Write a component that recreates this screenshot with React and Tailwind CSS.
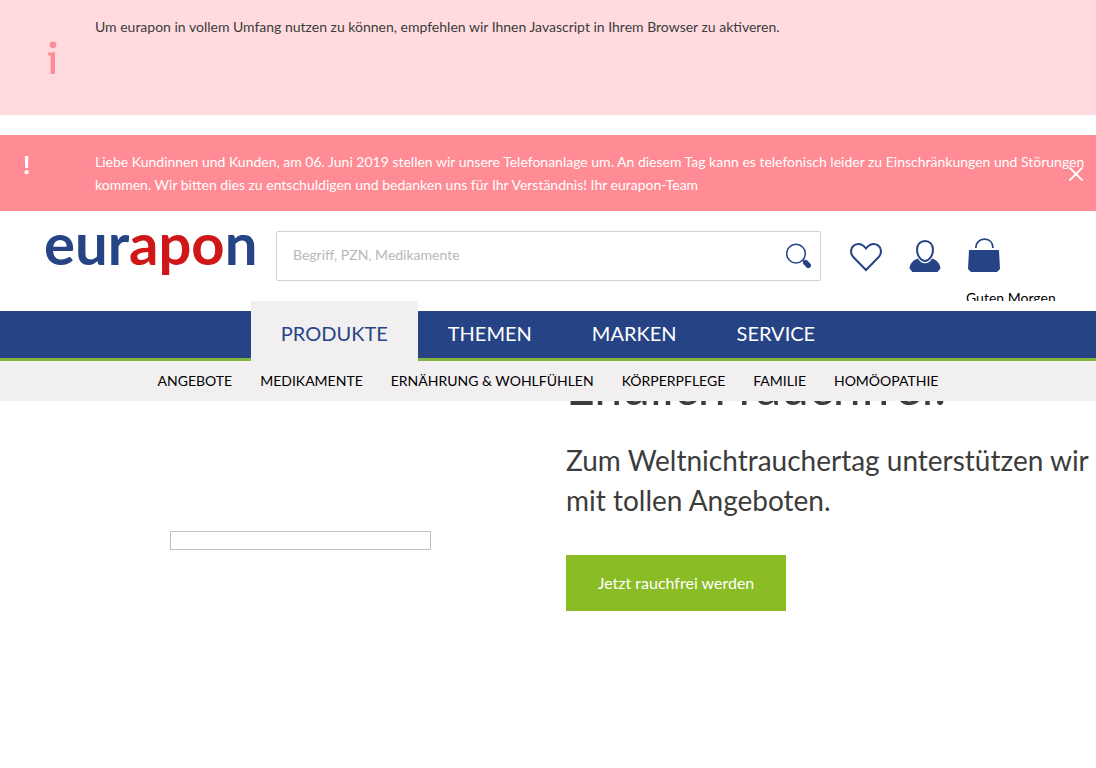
import React, { useState } from 'react';

const mainNav = ['PRODUKTE', 'THEMEN', 'MARKEN', 'SERVICE'];

const subNav = [
  'ANGEBOTE',
  'MEDIKAMENTE',
  'ERNÄHRUNG & WOHLFÜHLEN',
  'KÖRPERPFLEGE',
  'FAMILIE',
  'HOMÖOPATHIE'
];

const InfoIcon = () => (
  <svg width="10" height="34" viewBox="0 0 10 34" fill="#ff8c94" aria-hidden="true">
    <circle cx="5" cy="3.8" r="3.4" />
    <path d="M0.2 11.5Q4 11.5 7 11V33H2.6V14.6H0.2Z" />
  </svg>
);

const AlertIcon = () => (
  <svg width="6" height="20" viewBox="0 0 6 20" fill="#fff" aria-hidden="true">
    <path d="M0.8 1H4.4L3.9 13H1.3Z" />
    <circle cx="2.6" cy="17.2" r="2.1" />
  </svg>
);

const SearchIcon = () => (
  <svg width="26" height="26" viewBox="0 0 26 26" fill="none" stroke="#264485" aria-hidden="true">
    <circle cx="10" cy="10.6" r="9.3" strokeWidth="1.5" />
    <path d="M16.5 17L18.5 19" strokeWidth="1.5" />
    <path d="M19.7 19.7L22.3 22.3" strokeWidth="5.4" strokeLinecap="round" />
  </svg>
);

const HeartIcon = () => (
  <svg width="32" height="34" viewBox="0 0 32 34" fill="none" stroke="#264485" strokeWidth="2" aria-hidden="true">
    <path d="M16 32L3.5 19.300C-0.200 15 0.500 9.800 4 7.400C8 4.800 13 6 16 10.500C19 6 24 4.800 28 7.400C31.500 9.800 32.200 15 28.500 19.300Z" />
  </svg>
);

const UserIcon = () => (
  <svg width="32" height="34" viewBox="0 0 32 34" aria-hidden="true">
    <path d="M9 20.5C10.5 23.5 13 25.3 16 25.3C19 25.3 21.5 23.5 23 20.5C28 22 31 25.5 31.5 30.5L28.5 34H3.5L0.5 30.5C1 25.5 4 22 9 20.5Z" fill="#264485" />
    <path d="M16 3C20.8 3 24 6.500 24 11.500C24 17 20.500 23 16 23C11.500 23 8 17 8 11.500C8 6.500 11.200 3 16 3Z" fill="#fff" stroke="#264485" strokeWidth="2" />
  </svg>
);

const BagIcon = () => (
  <svg width="32" height="34" viewBox="0 0 32 34" aria-hidden="true">
    <path d="M1 12H31L32 31L29 34H3L0 31Z" fill="#264485" />
    <path d="M7.8 10C7.8 4.500 11.500 1.200 16.500 1.200C21.500 1.200 25 4.500 25 10" fill="none" stroke="#264485" strokeWidth="1.800" />
  </svg>
);

const App = () => {
  const [query, setQuery] = useState('');
  const [active, setActive] = useState('PRODUKTE');
  const [showNotice, setShowNotice] = useState(true);

  return (
    <div className="min-h-screen overflow-x-hidden bg-white font-['Lato',sans-serif] text-[#3c3c3b]">
      {/* Javascript hint */}
      <div className="mb-5 flex h-[115px] bg-[#ffdbdf] text-sm leading-[23px]">
        <div className="w-[95px] shrink-0 pl-12 pt-[41px]">
          <InfoIcon />
        </div>
        <p className="pt-[15px]">
          Um eurapon in vollem Umfang nutzen zu können, empfehlen wir Ihnen Javascript in Ihrem Browser zu aktiveren.
        </p>
      </div>

      {showNotice && (
        <div className="relative flex bg-[#ff8c94] py-[15px] pr-1 text-sm leading-[23px] text-white">
          <div className="w-[95px] shrink-0 pl-6 pt-[5px]">
            <AlertIcon />
          </div>
          <p>
            Liebe Kundinnen und Kunden, am 06. Juni 2019 stellen wir unsere Telefonanlage um. An diesem Tag kann es telefonisch leider zu Einschränkungen und Störungen kommen. Wir bitten dies zu entschuldigen und bedanken uns für Ihr Verständnis! Ihr eurapon-Team
          </p>
          <button
            type="button"
            aria-label="Schließen"
            onClick={() => setShowNotice(false)}
            className="absolute right-3 top-8"
          >
            <svg width="16" height="14" viewBox="0 0 16 14" stroke="#fff" strokeWidth="1.8" aria-hidden="true">
              <path d="M1.500 0.500L14.500 13.500M14.500 0.500L1.500 13.500" />
            </svg>
          </button>
        </div>
      )}

      <header className="flex h-[90px] items-start overflow-hidden pl-11 pr-10 pt-5">
        <a
          href="#"
          className="w-[232px] shrink-0 text-[58px] font-bold leading-6 text-[#264485]"
        >
          eur<span className="text-[#cf1719]">apo</span>n
        </a>
        <form
          className="flex h-[50px] flex-1 items-center rounded-xs border border-[#d0d0d0] pl-4 pr-2"
          onSubmit={(e) => e.preventDefault()}
        >
          <input
            type="text"
            aria-label="Suche"
            className="min-w-0 flex-1 pb-0.5 text-sm placeholder:text-[#b8b8b8] focus:outline-none"
            placeholder="Begriff, PZN, Medikamente"
            value={query}
            onChange={(e) => setQuery(e.target.value)}
          />
          <button type="submit" aria-label="Suchen">
            <SearchIcon />
          </button>
        </form>
        <div className="flex items-start gap-[27px] pl-[29px] pt-[7px]">
          <a href="#" aria-label="Merkzettel">
            <HeartIcon />
          </a>
          <a href="#" aria-label="Mein Konto">
            <UserIcon />
          </a>
          <div className="w-[88px]">
            <a href="#" aria-label="Warenkorb" className="block">
              <BagIcon />
            </a>
            <p className="-ml-0.5 mt-4 whitespace-nowrap text-sm text-black">Guten Morgen</p>
          </div>
        </div>
      </header>

      <nav className="border-b-3 border-[#82b440] bg-[#264485]">
        <div className="h-2.5 bg-white" />
        <ul className="-mb-[3px] -mt-2.5 flex justify-center">
          {mainNav.map((item) => (
            <li key={item}>
              <a
                href="#"
                onClick={() => setActive(item)}
                className={`block h-[60px] px-[30px] pt-2 text-xl leading-[48px] ${
                  item === active ? 'bg-[#f1eff0] text-[#264485]' : 'text-white'
                }`}
              >
                {item}
              </a>
            </li>
          ))}
        </ul>
      </nav>

      <nav className="h-10 bg-[#f1eff0]">
        <ul className="flex justify-center gap-7 text-sm leading-10 text-black">
          {subNav.map((item) => (
            <li key={item}>
              <a href="#">{item}</a>
            </li>
          ))}
        </ul>
      </nav>

      {/* Teaser, the headline slides under the navigation */}
      <section className="flex overflow-hidden pb-10">
        <div className="flex w-[566px] shrink-0 justify-center pl-[35px] pt-[130px]">
          <div className="h-[19px] w-[261px] border border-[#c0c0c0]" />
        </div>
        <div className="whitespace-nowrap">
          <h1 className="-mt-[45px] text-[50px] leading-[60px]">Endlich rauchfrei!</h1>
          <p className="mt-6 text-[28px] leading-10">
            Zum Weltnichtrauchertag unterstützen wir Sie
            <br />
            mit tollen Angeboten.
          </p>
          <a
            href="#"
            className="mt-[35px] inline-block w-[220px] bg-[#8abc25] text-center text-base leading-[56px] text-white"
          >
            Jetzt rauchfrei werden
          </a>
        </div>
      </section>
    </div>
  );
};

export default App;
